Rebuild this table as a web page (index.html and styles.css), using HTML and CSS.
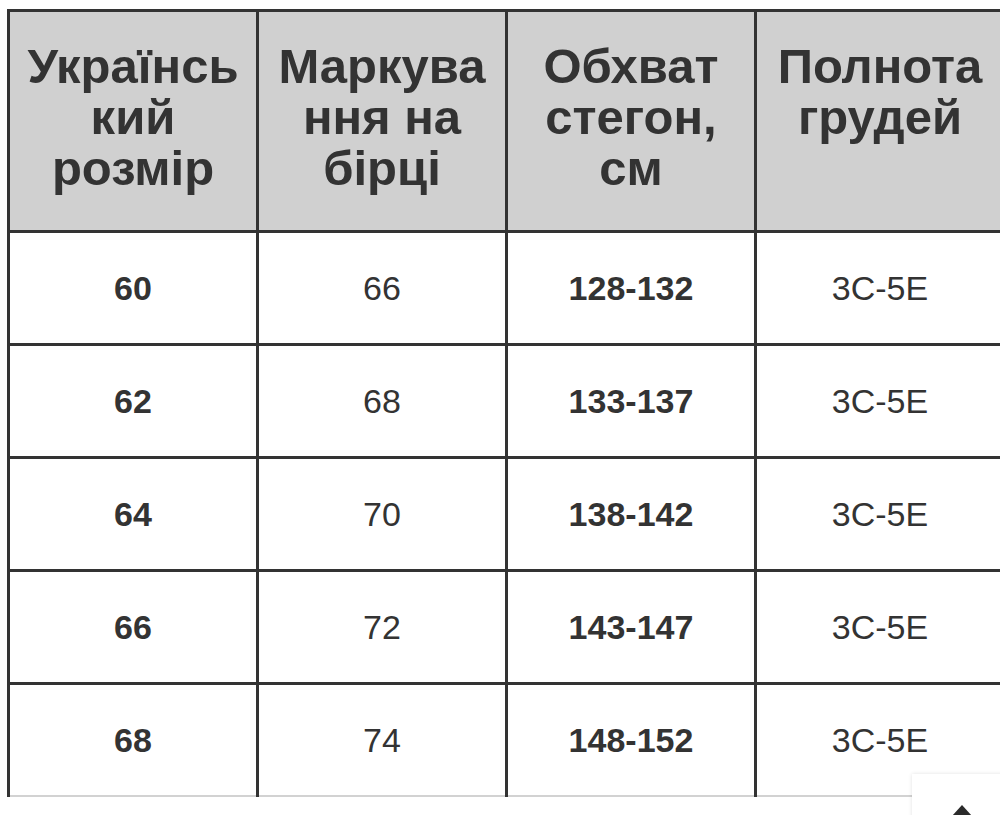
FILE: index.html
```html
<!DOCTYPE html>
<html lang="uk">
<head>
<meta charset="utf-8">
<title>Розмірна сітка</title>
<link rel="stylesheet" href="styles.css">
</head>
<body>
<div class="page">
  <table class="sizes">
    <thead>
      <tr>
        <th>Українсь<br>кий<br>розмір</th>
        <th>Маркува<br>ння на<br>бірці</th>
        <th>Обхват<br>стегон,<br>см</th>
        <th>Полнота<br>грудей</th>
      </tr>
    </thead>
    <tbody>
      <tr><td class="b">60</td><td>66</td><td class="b">128-132</td><td>3С-5Е</td></tr>
      <tr><td class="b">62</td><td>68</td><td class="b">133-137</td><td>3С-5Е</td></tr>
      <tr><td class="b">64</td><td>70</td><td class="b">138-142</td><td>3С-5Е</td></tr>
      <tr><td class="b">66</td><td>72</td><td class="b">143-147</td><td>3С-5Е</td></tr>
      <tr class="last"><td class="b">68</td><td>74</td><td class="b">148-152</td><td>3С-5Е</td></tr>
    </tbody>
  </table>
  <button class="to-top" aria-label="Вгору"><span class="arrow"></span></button>
</div>
</body>
</html>
```

FILE: styles.css
```css
html, body {
  margin: 0;
  padding: 0;
  background: #ffffff;
  overflow: hidden;
}

body {
  font-family: "Liberation Sans", Arial, Helvetica, sans-serif;
  color: #333333;
  width: 1000px;
  height: 815px;
}

.page {
  position: relative;
  width: 1000px;
  height: 815px;
  padding: 9px 0 0 7px;
  box-sizing: border-box;
}

.sizes {
  border-collapse: collapse;
  table-layout: fixed;
  width: 999px;
}

.sizes th,
.sizes td {
  border: 3px solid #333333;
  width: 246px;
  text-align: center;
  padding: 0;
}

.sizes th {
  background: #d0d0d0;
  font-size: 49px;
  font-weight: bold;
  line-height: 51px;
  height: 221px;
  vertical-align: top;
  padding-top: 29px;
  box-sizing: border-box;
  letter-spacing: 0;
}

.sizes td {
  height: 110px;
  font-size: 34px;
  font-weight: normal;
  vertical-align: middle;
}

.sizes td.b {
  font-weight: bold;
}

.sizes tr.last td {
  border-bottom: 2px solid #d2d2d2;
}

.to-top {
  position: absolute;
  left: 912px;
  top: 774px;
  width: 100px;
  height: 60px;
  background: #ffffff;
  border: none;
  box-shadow: 0 0 4px rgba(0, 0, 0, 0.12);
  padding: 0;
  cursor: pointer;
}

.to-top .arrow {
  position: absolute;
  left: 40px;
  top: 31px;
  width: 0;
  height: 0;
  border-left: 10px solid transparent;
  border-right: 10px solid transparent;
  border-bottom: 11px solid #2b2b2b;
}
```
